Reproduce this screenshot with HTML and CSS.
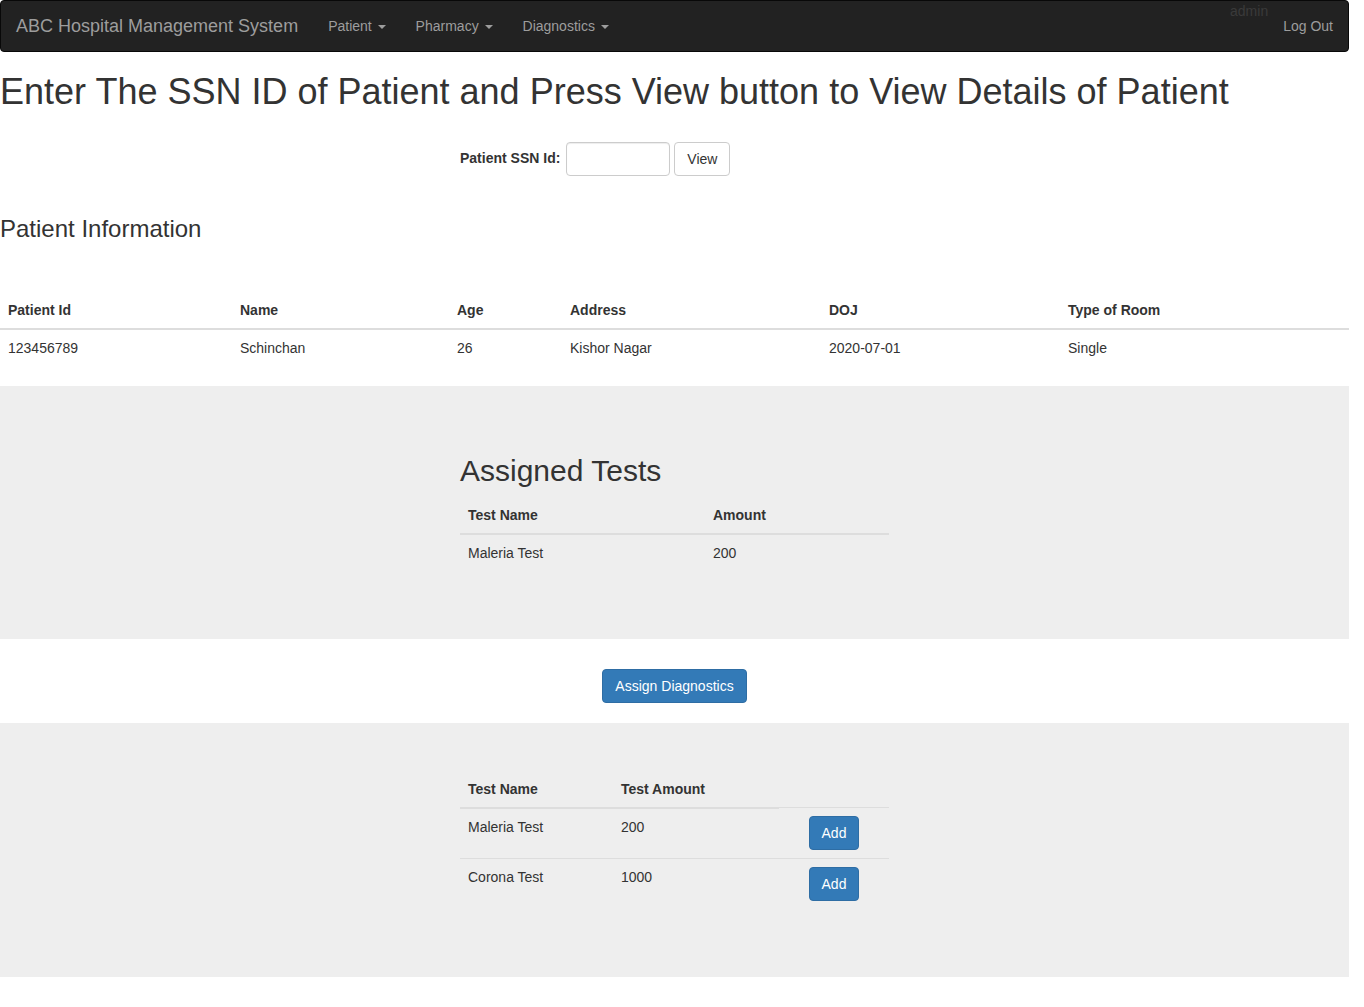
FILE: index.html
```html
<!DOCTYPE html>
<html lang="en">
<head>
<meta charset="utf-8">
<title>ABC Hospital Management System</title>
<link rel="stylesheet" href="styles.css">
</head>
<body>
<div class="page">
  <nav class="navbar">
    <a class="brand" href="#">ABC Hospital Management System</a>
    <ul class="nav">
      <li><a href="#">Patient <span class="caret"></span></a></li>
      <li><a href="#">Pharmacy <span class="caret"></span></a></li>
      <li><a href="#">Diagnostics <span class="caret"></span></a></li>
    </ul>
    <div class="nav-right">
      <span class="admin">admin</span>
      <a class="logout" href="#">Log Out</a>
    </div>
  </nav>

  <h1 class="title">Enter The SSN ID of Patient and Press View button to View Details of Patient</h1>

  <div class="center-col">
    <form class="ssn-form">
      <label class="ssn-label">Patient SSN Id:</label>
      <input class="ssn-input" type="text">
      <button class="btn btn-default" type="button">View</button>
    </form>
  </div>

  <h3 class="section-title">Patient Information</h3>

  <table class="table patient-table">
    <colgroup>
      <col class="pc1"><col class="pc2"><col class="pc3"><col class="pc4"><col class="pc5"><col class="pc6">
    </colgroup>
    <thead>
      <tr><th>Patient Id</th><th>Name</th><th>Age</th><th>Address</th><th>DOJ</th><th>Type of Room</th></tr>
    </thead>
    <tbody>
      <tr><td>123456789</td><td>Schinchan</td><td>26</td><td>Kishor Nagar</td><td>2020-07-01</td><td>Single</td></tr>
    </tbody>
  </table>

  <section class="band band-one">
    <div class="center-col">
      <h2 class="band-title">Assigned Tests</h2>
      <table class="table assigned-table">
        <colgroup><col class="ac1"><col class="ac2"></colgroup>
        <thead><tr><th>Test Name</th><th>Amount</th></tr></thead>
        <tbody><tr><td>Maleria Test</td><td>200</td></tr></tbody>
      </table>
    </div>
  </section>

  <section class="band-white">
    <button class="btn btn-primary" type="button">Assign Diagnostics</button>
  </section>

  <section class="band band-two">
    <div class="center-col">
      <table class="table tests-table">
        <colgroup><col class="tc1"><col class="tc2"><col class="tc3"></colgroup>
        <thead><tr><th>Test Name</th><th>Test Amount</th></tr></thead>
        <tbody>
          <tr><td>Maleria Test</td><td>200</td><td class="btn-cell"><button class="btn btn-primary" type="button">Add</button></td></tr>
          <tr><td>Corona Test</td><td>1000</td><td class="btn-cell"><button class="btn btn-primary" type="button">Add</button></td></tr>
        </tbody>
      </table>
    </div>
  </section>
</div>
</body>
</html>
```

FILE: styles.css
```css
* { box-sizing: border-box; }

html, body {
  margin: 0;
  padding: 0;
  background: #fff;
}

body {
  font-family: "Liberation Sans", Arial, Helvetica, sans-serif;
  font-size: 14px;
  line-height: 1.42857;
  color: #333;
}

.page {
  width: 1349px;
}

/* Navbar */
.navbar {
  display: flex;
  align-items: stretch;
  height: 52px;
  background: #222;
  border: 1px solid #080808;
  border-radius: 4px;
}

.brand {
  display: block;
  padding: 15px;
  font-size: 18px;
  line-height: 20px;
  color: #9d9d9d;
  text-decoration: none;
}

.nav {
  display: flex;
  list-style: none;
  margin: 0;
  padding: 0;
}

.nav a {
  display: block;
  padding: 15px;
  line-height: 20px;
  color: #9d9d9d;
  text-decoration: none;
}

.caret {
  display: inline-block;
  width: 0;
  height: 0;
  margin-left: 2px;
  vertical-align: middle;
  border-top: 4px solid #9d9d9d;
  border-left: 4px solid transparent;
  border-right: 4px solid transparent;
}

.nav-right {
  margin-left: auto;
  display: flex;
  align-items: flex-start;
}

.admin {
  line-height: 20px;
  color: #3a3a3a;
}

.logout {
  display: block;
  padding: 15px;
  line-height: 20px;
  color: #9d9d9d;
  text-decoration: none;
}

/* Heading */
.title {
  margin: 20px 0 10px;
  font-size: 36px;
  font-weight: 500;
  line-height: 1.1;
  color: #333;
}

.center-col {
  width: 429px;
  margin: 0 auto;
}

.ssn-form {
  display: flex;
  align-items: center;
  gap: 4px;
  margin: 30px 0 0;
}

.ssn-label {
  font-weight: 700;
  margin-right: 2px;
}

.ssn-input {
  width: 104px;
  height: 34px;
  border: 1px solid #ccc;
  border-radius: 4px;
  padding: 6px 12px;
  font: inherit;
  box-shadow: inset 0 1px 1px rgba(0,0,0,.075);
}

.btn {
  display: inline-block;
  height: 34px;
  padding: 6px 12px;
  font-family: inherit;
  font-size: 14px;
  line-height: 20px;
  border: 1px solid transparent;
  border-radius: 4px;
  cursor: pointer;
}

.btn-default {
  background: #fff;
  border-color: #ccc;
  color: #333;
}

.btn-primary {
  background: #337ab7;
  border-color: #2e6da4;
  color: #fff;
}

.section-title {
  margin: 40px 0 50px;
  font-size: 24px;
  font-weight: 500;
  line-height: 1.1;
}

/* Tables */
.table {
  width: 100%;
  border-collapse: collapse;
  border-spacing: 0;
  table-layout: fixed;
}

.table th {
  text-align: left;
  padding: 8px;
  line-height: 20px;
  font-weight: 700;
  vertical-align: bottom;
  border-bottom: 2px solid #ddd;
}

.table td {
  padding: 8px;
  line-height: 20px;
  vertical-align: top;
  border-top: 1px solid #ddd;
}

.patient-table { margin-bottom: 20px; }
.pc1 { width: 232px; }
.pc2 { width: 217px; }
.pc3 { width: 113px; }
.pc4 { width: 259px; }
.pc5 { width: 239px; }
.pc6 { width: 289px; }

.band {
  background: #eee;
}

.band-one {
  padding: 48px 0 48px;
}

.band-title {
  margin: 20px 0 10px;
  font-size: 30px;
  font-weight: 500;
  line-height: 1.1;
}

.assigned-table { margin-bottom: 20px; }
.ac1 { width: 245px; }
.ac2 { width: 184px; }

.band-white {
  padding: 30px 0 20px;
  text-align: center;
}

.band-two {
  padding: 48px 0 48px;
}

.tests-table { margin-bottom: 20px; }
.tc1 { width: 153px; }
.tc2 { width: 166px; }
.tc3 { width: 110px; }

.btn-cell {
  text-align: center;
}
```
